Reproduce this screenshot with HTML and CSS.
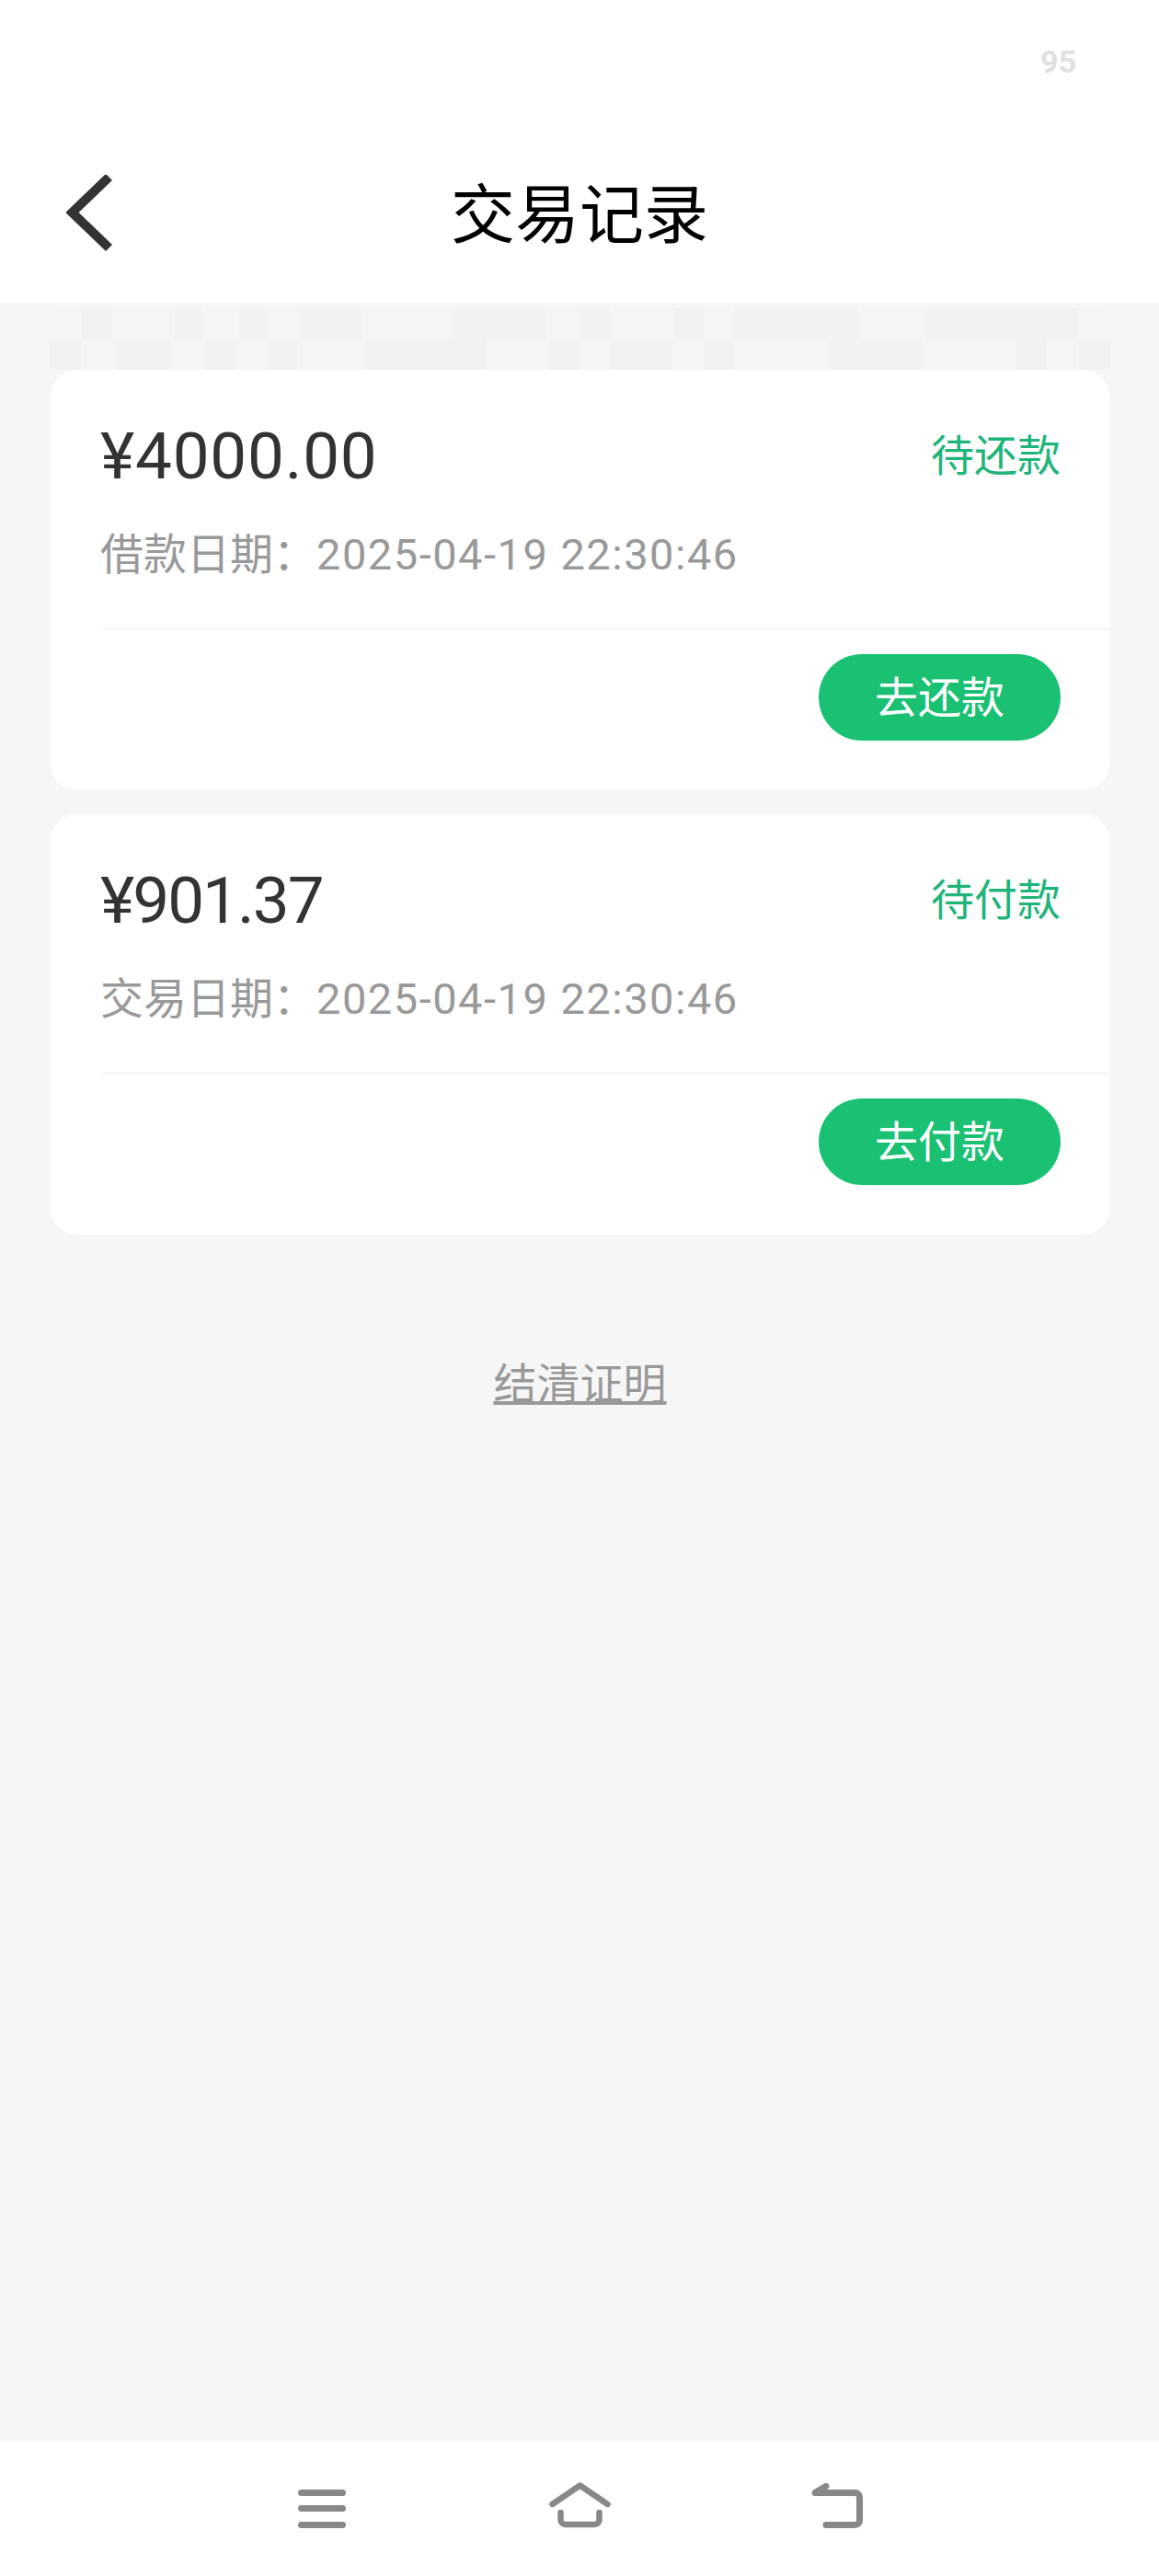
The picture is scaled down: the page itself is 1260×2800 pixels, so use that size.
FILE: index.html
```html
<!DOCTYPE html>
<html lang="zh-CN">
<head>
<meta charset="utf-8">
<title>交易记录</title>
<link rel="stylesheet" href="styles.css">
</head>
<body>
<div class="page">
  <header class="header">
    <div class="status"><span class="status-num">95</span></div>
    <div class="nav">
      <svg class="back" width="50" height="84" viewBox="0 0 50 84"><polyline points="46.5,2.5 6.500,41 46.500,79.500" fill="none" stroke="#333" stroke-width="10"/></svg>
      <h1 class="title">交易记录</h1>
    </div>
  </header>
  <main class="main">
    <div class="strip"></div>
    <div class="cards">
      <section class="card">
        <div class="card-top">
          <span class="amount">¥4000.00</span>
          <span class="state">待还款</span>
        </div>
        <div class="date"><span class="date-label">借款日期：</span>2025-04-19 22:30:46</div>
        <div class="rule"></div>
        <div class="actions"><button class="btn">去还款</button></div>
      </section>
      <section class="card">
        <div class="card-top">
          <span class="amount amount-tight">¥901.37</span>
          <span class="state">待付款</span>
        </div>
        <div class="date"><span class="date-label">交易日期：</span>2025-04-19 22:30:46</div>
        <div class="rule"></div>
        <div class="actions"><button class="btn">去付款</button></div>
      </section>
    </div>
    <a class="settle">结清证明</a>
  </main>
  <footer class="sysnav">
    <div class="slot">
      <svg width="52" height="42" viewBox="0 0 52 42"><g fill="#888"><rect width="52" height="7" rx="3.5"/><rect y="17" width="52" height="7" rx="3.5"/><rect y="35" width="52" height="7" rx="3.5"/></g></svg>
    </div>
    <div class="slot">
      <svg width="67" height="50" viewBox="0 0 67 50"><g fill="none" stroke="#888" stroke-width="6.5" stroke-linecap="round" stroke-linejoin="round"><path d="M3.5 24 33.5 3.5 63.5 24"/><path d="M12.5 33V41a5 5 0 0 0 5 5H49.500a5 5 0 0 0 5-5V33"/></g></svg>
    </div>
    <div class="slot">
      <svg width="56" height="49" viewBox="0 0 56 49"><path d="M16 45.500H47.500a5 5 0 0 0 5-5V15.500a5 5 0 0 0-5-5H4L16 3.500" fill="none" stroke="#888" stroke-width="7" stroke-linecap="round" stroke-linejoin="round"/></svg>
    </div>
  </footer>
</div>
</body>
</html>
```
FILE: styles.css
```css
* { box-sizing: border-box; }
html, body { margin: 0; padding: 0; }
body {
  font-family: "Roboto", "Noto Sans CJK SC", sans-serif;
  background: #f6f6f6;
}
.page {
  width: 1260px;
  height: 2800px;
  display: flex;
  flex-direction: column;
}
.header {
  height: 329px;
  background: #fff;
  display: flex;
  flex-direction: column;
}
.status {
  height: 134px;
  display: flex;
  align-items: center;
  justify-content: flex-end;
  padding-right: 90px;
}
.status-num {
  font-size: 34px;
  font-weight: 700;
  color: #e0e0e0;
}
.nav {
  height: 195px;
  display: grid;
  grid-template-columns: 1fr auto 1fr;
  align-items: center;
  padding-left: 72px;
  padding-right: 72px;
}
.back { display: block; }
.title {
  margin: 0;
  padding-bottom: 6px;
  font-family: "Noto Sans CJK SC", sans-serif;
  font-size: 70px;
  font-weight: 400;
  color: #000;
  line-height: 90px;
}
.main {
  flex: 1;
  padding: 6px 53px 0 54px;
  display: flex;
  flex-direction: column;
}
.strip {
  height: 67px;
  background-color: #f5f5f5;
  background-repeat: no-repeat;
  background-size: 100% 34px, 100% 33px;
  background-position: 0 0, 0 34px;
  background-image:
    linear-gradient(90deg,
      #f5f5f5 34px, #f1f1f1 34px, #f1f1f1 68px, #f5f5f5 68px,
      #f5f5f5 136px, #f1f1f1 136px, #f1f1f1 166px, #f5f5f5 166px,
      #f5f5f5 206px, #f1f1f1 206px, #f1f1f1 236px, #f5f5f5 236px,
      #f5f5f5 271px, #f1f1f1 271px, #f1f1f1 339px, #f5f5f5 339px,
      #f5f5f5 439px, #f1f1f1 439px, #f1f1f1 539px, #f5f5f5 539px,
      #f5f5f5 576px, #f1f1f1 576px, #f1f1f1 609px, #f5f5f5 609px,
      #f5f5f5 679px, #f1f1f1 679px, #f1f1f1 711px, #f5f5f5 711px,
      #f5f5f5 744px, #f1f1f1 744px, #f1f1f1 879px, #f5f5f5 879px,
      #f5f5f5 951px, #f1f1f1 951px, #f1f1f1 1118px, #f5f5f5 1118px),
    linear-gradient(90deg,
      #f1f1f1 34px, #f5f5f5 34px,
      #f5f5f5 71px, #f1f1f1 71px, #f1f1f1 131px, #f5f5f5 131px,
      #f5f5f5 168px, #f1f1f1 168px, #f1f1f1 203px, #f5f5f5 203px,
      #f5f5f5 239px, #f1f1f1 239px, #f1f1f1 269px, #f5f5f5 269px,
      #f5f5f5 343px, #f1f1f1 343px, #f1f1f1 474px, #f5f5f5 474px,
      #f5f5f5 543px, #f1f1f1 543px, #f1f1f1 576px, #f5f5f5 576px,
      #f5f5f5 609px, #f1f1f1 609px, #f1f1f1 676px, #f5f5f5 676px,
      #f5f5f5 711px, #f1f1f1 711px, #f1f1f1 744px, #f5f5f5 744px,
      #f5f5f5 848px, #f1f1f1 848px, #f1f1f1 948px, #f5f5f5 948px,
      #f5f5f5 1051px, #f1f1f1 1051px, #f1f1f1 1084px, #f5f5f5 1084px,
      #f5f5f5 1119px, #f1f1f1 1119px);
}
.cards {
  display: flex;
  flex-direction: column;
  gap: 26px;
}
.card {
  height: 457px;
  background: #fff;
  border-radius: 30px;
  padding: 54px 0 54px 55px;
}
.card-top {
  height: 74px;
  padding-right: 54px;
  display: flex;
  align-items: center;
  justify-content: space-between;
}
.amount {
  padding-top: 6px;
  font-size: 71px;
  letter-spacing: 0.75px;
  color: #333;
  line-height: 74px;
}
.amount-tight {
  letter-spacing: -2px;
}
.state {
  padding-bottom: 3px;
  font-family: "Noto Sans CJK SC", sans-serif;
  font-size: 47px;
  color: #1fb57a;
  line-height: 74px;
}
.date {
  margin-top: 39px;
  height: 60px;
  line-height: 60px;
  font-size: 47px;
  color: #999;
  letter-spacing: 1.5px;
}
.date-label {
  font-family: "Noto Sans CJK SC", sans-serif;
  letter-spacing: 0;
}
.rule {
  margin-top: 54px;
  height: 1px;
  background: #ededed;
}
.actions {
  margin-top: 27px;
  padding-right: 54px;
  display: flex;
  justify-content: flex-end;
}
.btn {
  width: 263px;
  height: 94px;
  border: 0;
  padding: 0 0 8px;
  border-radius: 47px;
  background: #1ac173;
  color: #fff;
  font-family: "Noto Sans CJK SC", sans-serif;
  font-size: 47px;
}
.settle {
  margin-top: 129px;
  align-self: center;
  font-family: "Noto Sans CJK SC", sans-serif;
  font-size: 47px;
  line-height: 60px;
  color: #999;
  text-decoration: underline;
  text-decoration-thickness: 4px;
}
.sysnav {
  height: 147px;
  background: #fff;
  padding-bottom: 52px;
  display: flex;
  justify-content: center;
  align-items: flex-end;
}
.slot {
  width: 280px;
  display: flex;
  justify-content: center;
}
.slot svg { display: block; }
```
